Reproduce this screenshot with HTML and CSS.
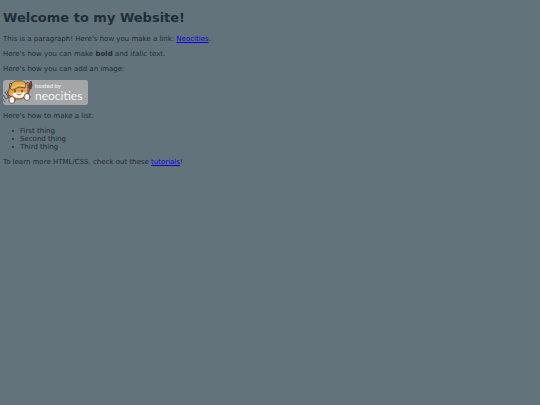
FILE: index.html
```html
<!DOCTYPE html>
<html lang="en">
<head>
<meta charset="UTF-8">
<meta name="viewport" content="width=device-width, initial-scale=1">
<title>The web site of my dreams</title>
<link rel="stylesheet" href="styles.css">
</head>
<body>
<h1>Welcome to my Website!</h1>
<p>This is a paragraph! Here's how you make a link: <a href="#neocities">Neocities</a>.</p>
<p>Here's how you can make <strong>bold</strong> and <em>italic</em> text.</p>
<p>Here's how you can add an image:</p>
<svg class="badge" width="85" height="25" viewBox="0 0 85 25" role="img" aria-label="hosted by neocities">
  <rect width="85" height="25" rx="3" fill="#a5a6a7"/>
  <g stroke="#393735" stroke-width=".7" stroke-linejoin="round" stroke-linecap="round">
    <path d="M6 10 7 3l6 3h7l5-4v10l-1 4-6 3h-5l-5-2-3-3z" fill="#e9a04d"/>
    <path d="M9 14q4-3 6-1 4-2 8 0-2 5-7 5-5 0-7-4z" fill="#fff0dc" stroke="none"/>
    <path d="M7 8 9 3q3-3 7-2 5-1 7 3l-1 4-6-1-6 3z" fill="#e0ae45"/>
    <path d="m9 8 6-3 7 1" fill="none" stroke="#f9dc77"/>
    <path d="M12 10v2m7-2v2" fill="none" stroke-width="1.2"/>
    <path d="m14 14 2 1 2-1" fill="none"/>
    <path d="m2 12 6 9M0 15l3 4 3-2-2-6M0 19l2 3" fill="none" stroke="#53575a" stroke-width="1"/>
    <path d="m27 8-3 9" stroke="#784638" stroke-width="1.2"/>
    <path d="m26 5 2-4 1 4-1 4-2-1z" fill="#9c282a"/>
    <ellipse cx="9" cy="20" rx="3" ry="3.5" fill="#fff3e4"/>
    <ellipse cx="24" cy="17" rx="3" ry="3.5" fill="#fff3e4"/>
  </g>
  <text class="badge-small" x="32" y="8">hosted by</text>
  <text class="badge-name" x="32" y="20">neocities</text>
</svg>
<p>Here's how to make a list:</p>
<ul>
  <li>First thing</li>
  <li>Second thing</li>
  <li>Third thing</li>
</ul>
<p>To learn more HTML/CSS, check out these <a href="#tutorials">tutorials</a>!</p>
</body>
</html>
```
FILE: styles.css
```css
body {
  margin: 10px 3px;
  background: #63737c;
  color: #1f2d35;
  font: 7px/8px Verdana, "DejaVu Sans", sans-serif;
}

h1 {
  margin: 0 0 9px;
  font-size: 13px;
  line-height: 16px;
}

p,
ul {
  margin: 7px 0;
}

ul {
  padding-left: 9px;
  list-style: none;
}

li {
  display: flex;
  align-items: center;
  gap: 6px;
}

li::before {
  content: "";
  width: 2px;
  height: 2px;
  border-radius: 50%;
  background: currentColor;
}

a {
  color: #0a08dc;
}

.badge {
  display: block;
  margin: 7px 0;
}

.badge-small,
.badge-name {
  fill: #f4f4f4;
  font-family: Lato, sans-serif;
}

.badge-small {
  font-size: 6px;
}

.badge-name {
  font-size: 12px;
}
```
